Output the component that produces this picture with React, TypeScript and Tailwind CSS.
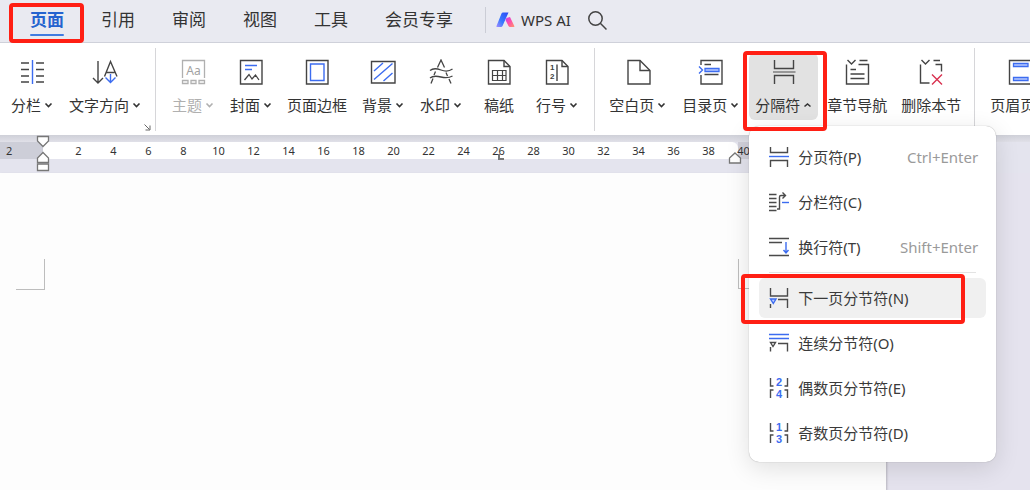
import { useState } from 'react';
import type { ReactNode } from 'react';

interface Tool {
  label: string;
  icon: ReactNode;
  dropdown?: boolean;
  disabled?: boolean;
}

interface MenuItem {
  label: string;
  shortcut?: string;
  icon: ReactNode;
}

const TABS = ['页面', '引用', '审阅', '视图', '工具', '会员专享'];

const RULER_MARKS = Array.from({ length: 20 }, (_, i) => (i + 1) * 2);

const BLUE = '#3c6cf0';

function ToolIcon({ children }: { children: ReactNode }) {
  return (
    <svg width="26" height="26" viewBox="0 0 26 26" fill="none" stroke="#444" strokeWidth="1.4" aria-hidden="true">
      {children}
    </svg>
  );
}

function SmallIcon({ children }: { children: ReactNode }) {
  return (
    <svg className="shrink-0 overflow-visible" width="20" height="20" viewBox="0 0 20 20" fill="none" stroke="#4a4a4a" strokeWidth="1.4" aria-hidden="true">
      {children}
    </svg>
  );
}

// Four page corners with a pair of page numbers between them
function PageNumbersIcon({ top, bottom }: { top: number; bottom: number }) {
  return (
    <SmallIcon>
      <path d="M1.5 0V8H4.5M18.5 0V8H15.5M1.5 20V12H4.5M18.5 20V12H15.5" />
      <g fill={BLUE} stroke="none" fontSize="11" fontWeight="700" fontFamily="Liberation Sans, sans-serif" textAnchor="middle">
        <text x="10" y="8">{top}</text>
        <text x="10" y="20">{bottom}</text>
      </g>
    </SmallIcon>
  );
}

const LAYOUT_TOOLS: Tool[] = [
  {
    label: '分栏',
    dropdown: true,
    icon: (
      <ToolIcon>
        <path d="M2 4H10M2 10.5H10M2 17H10M2 23H10M17 4H25M17 10.5H25M17 17H25M17 23H25" />
        <path d="M13.5 1V25" stroke={BLUE} />
      </ToolIcon>
    ),
  },
  {
    label: '文字方向',
    dropdown: true,
    icon: (
      <ToolIcon>
        <path d="M6 2V24M1 19L6 24L11 19" />
        <path d="M12.5 17.5L18.5 2.5L25 17.5M14.5 13.5H22.5" />
        <path d="M18.5 15V23.5M13.5 18.5L18.5 23.5L23.5 18.5" stroke={BLUE} />
      </ToolIcon>
    ),
  },
];

const PAGE_TOOLS: Tool[] = [
  {
    label: '主题',
    dropdown: true,
    disabled: true,
    icon: (
      <svg width="26" height="26" viewBox="0 0 26 26" fill="none" stroke="#b0b0b0" strokeWidth="1.3" aria-hidden="true">
        <path d="M2.5 19V1.5H24.5V19" />
        <path d="M2.5 21.5H8V24.5H2.5ZM11 21.5H16V24.5H11ZM19 21.5H24.5V24.5H19Z" />
        <text x="13.5" y="15.5" fontSize="12" fontFamily="Noto Sans, sans-serif" textAnchor="middle" fill="#a2a2a2" stroke="none">Aa</text>
      </svg>
    ),
  },
  {
    label: '封面',
    dropdown: true,
    icon: (
      <ToolIcon>
        <path d="M2.5 1.5H24V25H2.5Z" />
        <path d="M7 6.5H19M7 10.5H14" stroke={BLUE} />
        <path d="M6.5 21L11 15.5L14 20L17.5 16L21 21" strokeWidth="1.3" />
      </ToolIcon>
    ),
  },
  {
    label: '页面边框',
    icon: (
      <ToolIcon>
        <path d="M2.5 1.5H24V25H2.5Z" />
        <path d="M6.5 5H20V21.5H6.5Z" stroke={BLUE} />
      </ToolIcon>
    ),
  },
  {
    label: '背景',
    dropdown: true,
    icon: (
      <ToolIcon>
        <path d="M1.5 2.5H25V24H1.5Z" />
        <path d="M4 12L13 4M4 20.5L22.5 4.5M13.5 22L22.5 14" stroke={BLUE} />
      </ToolIcon>
    ),
  },
  {
    label: '水印',
    dropdown: true,
    icon: (
      <ToolIcon>
        <g strokeWidth="1.3">
          <path d="M9.5 8.5L13 1L16.5 8.5" />
          <path d="M2 11.5C5 9 9 9.5 13 11C17 12.5 21 12.5 24.5 10" />
          <path d="M2 19C5 16.5 9 17 13 18C17 19 21 19 24.5 17" />
          <path d="M7.5 12.5L6 16M5 19.5L3 24.5M18 13.5L19.5 17M21 20L23 24.5" />
        </g>
      </ToolIcon>
    ),
  },
  {
    label: '稿纸',
    icon: (
      <ToolIcon>
        <path d="M2.5 1.5H18L24 7.5V25H2.5Z" />
        <path d="M18 1.5V7.5H24" />
        <path d="M6.5 11.5H20V21.5H6.5ZM6.5 16.5H20M11.5 11.5V21.5M16.5 11.5V21.5" strokeWidth="1.2" />
      </ToolIcon>
    ),
  },
  {
    label: '行号',
    dropdown: true,
    icon: (
      <ToolIcon>
        <path d="M2.5 1.5H18L24 7.5V25H2.5Z" />
        <path d="M18 1.5V7.5H24M13 5.5V22" />
        <g fill="#3f3f3f" stroke="none" fontSize="8" fontWeight="700" fontFamily="Liberation Sans, sans-serif">
          <text x="6" y="11">1</text>
          <text x="6" y="20">2</text>
        </g>
      </ToolIcon>
    ),
  },
];

const INSERT_TOOLS: Tool[] = [
  {
    label: '空白页',
    dropdown: true,
    icon: (
      <ToolIcon>
        <path d="M3 1.5H15L25 11.5V25H3Z" />
        <path d="M15 1.5V11.5H25" />
      </ToolIcon>
    ),
  },
  {
    label: '目录页',
    dropdown: true,
    icon: (
      <ToolIcon>
        <path d="M3 6V1.5H24V25H3V16M6.5 5.5H13M6.5 15.5H20.5" />
        <path d="M7 9.5H21V12.5H7Z" stroke={BLUE} fill="#b9caff" strokeWidth="1.3" />
        <path d="M1 7.5L4.5 11L1 14.5" stroke={BLUE} />
      </ToolIcon>
    ),
  },
];

const BREAK_TOOL: Tool = {
  label: '分隔符',
  dropdown: true,
  icon: (
    <ToolIcon>
      <path d="M3.5 1V9.5H22.5V1M3.5 25V16.5H22.5V25" />
      <path d="M2 13H24.5" stroke="#777" />
    </ToolIcon>
  ),
};

const CHAPTER_TOOLS: Tool[] = [
  {
    label: '章节导航',
    icon: (
      <ToolIcon>
        <path d="M3.5 1L7.5 5L11.5 1M15.5 1.5H23.5M2.5 5.5V25H24.5V5.5H14.5" />
        <path d="M6.5 10.5H12M6.5 15H20.5M6.5 19.5H20.5" strokeWidth="1.3" />
      </ToolIcon>
    ),
  },
  {
    label: '删除本节',
    icon: (
      <ToolIcon>
        <path d="M3.5 1L7.5 5L11.5 1M15.5 1.5H22M17.5 5.5H23.5V12.5M2.5 5.5V24H11.5" />
        <path d="M14 15.5L24 25.5M24 15.5L14 25.5" stroke="#d9304f" />
      </ToolIcon>
    ),
  },
];

const HEADER_TOOL: Tool = {
  label: '页眉页脚',
  icon: (
    <ToolIcon>
      <path d="M2.5 1.5H25V25H2.5Z" />
      <path d="M6.5 4.5H21V7.5H6.5ZM6.5 18.5H21V21.5H6.5Z" stroke={BLUE} fill="#b9caff" strokeWidth="1.3" />
    </ToolIcon>
  ),
};

const BREAK_ITEMS: MenuItem[] = [
  {
    label: '分页符(P)',
    shortcut: 'Ctrl+Enter',
    icon: (
      <SmallIcon>
        <path d="M1.5 0V5.5H18.5V0M1.5 20V13.5H18.5V20" />
        <path d="M0 9.5H20" stroke={BLUE} />
      </SmallIcon>
    ),
  },
  {
    label: '分栏符(C)',
    icon: (
      <SmallIcon>
        <path d="M0 2.5H7.5M0 6.5H7.5M0 10.5H7.5M0 14.5H7.5M0 18.5H7.5" />
        <path d="M8 17H10.5V5Q10.5 3.5 12 3.5H16.5M13.5 0.5L16.5 3.5L13.5 6.5" />
        <path d="M13 10.5H20" stroke={BLUE} />
      </SmallIcon>
    ),
  },
  {
    label: '换行符(T)',
    shortcut: 'Shift+Enter',
    icon: (
      <SmallIcon>
        <path d="M0 1.5H20M0 5.5H13M0 18.5H20" />
        <path d="M17 5V16M14.5 13L17 16L19.5 13" stroke={BLUE} />
      </SmallIcon>
    ),
  },
];

const SECTION_ITEMS: MenuItem[] = [
  {
    label: '下一页分节符(N)',
    icon: (
      <SmallIcon>
        <path d="M1.5 0V8H18.5V0M9 11.5H18.5V20M1.5 16V20" />
        <path d="M1.5 11H7L4.3 15.5Z" stroke={BLUE} fill="#b9caff" />
      </SmallIcon>
    ),
  },
  {
    label: '连续分节符(O)',
    icon: (
      <SmallIcon>
        <path d="M0 1.5H20M0 5.5H20" stroke={BLUE} />
        <path d="M9 10.5H18.5V18.5M1.5 14V18.5M1.5 9.5H6.5L4 13.5Z" />
      </SmallIcon>
    ),
  },
  { label: '偶数页分节符(E)', icon: <PageNumbersIcon top={2} bottom={4} /> },
  { label: '奇数页分节符(D)', icon: <PageNumbersIcon top={1} bottom={3} /> },
];

function ToolButton({ tool, open, onClick }: { tool: Tool; open?: boolean; onClick?: () => void }) {
  return (
    <button
      type="button"
      disabled={tool.disabled}
      onClick={onClick}
      className={`flex h-[67px] min-w-[54px] shrink-0 flex-col items-center rounded-md pt-1.5 ${
        tool.dropdown ? 'px-1.5' : 'px-[5px]'
      } ${open ? 'bg-[#e2e2e2]' : ''} ${tool.disabled ? 'text-[#b0b0b0]' : 'text-[#333]'}`}
    >
      {tool.icon}
      <span className="mt-2 flex items-center gap-[3px] whitespace-nowrap text-[15px] leading-6">
        {tool.label}
        {tool.dropdown && (
          <svg width="9" height="6" viewBox="0 0 9 6" fill="none" stroke="currentColor" strokeWidth="1.6" aria-hidden="true">
            <path d={open ? 'M1.5 4.5L4.5 2L7.5 4.5' : 'M1.5 1.5L4.5 4.5L7.5 1.5'} />
          </svg>
        )}
      </span>
    </button>
  );
}

function Divider() {
  return <div className="-mt-[5px] h-[83px] w-px shrink-0 bg-[#d6d6d9]" />;
}

function Callout({ className }: { className: string }) {
  return <div className={`pointer-events-none absolute rounded-sm border-4 border-[#ff1f14] ${className}`} />;
}

function MenuRow({ item, active }: { item: MenuItem; active?: boolean }) {
  return (
    <button
      type="button"
      role="menuitem"
      className={`relative flex h-10 items-center rounded-md pl-2.5 pr-2 text-[15px] text-[#3a3a3a] ${active ? 'bg-[#f0f0f0]' : ''}`}
    >
      {item.icon}
      <span className="ml-[9px]">{item.label}</span>
      {item.shortcut && <span className="ml-auto text-[#9a9a9a]">{item.shortcut}</span>}
      {active && <Callout className="-left-[18px] -top-1 h-[50px] w-56" />}
    </button>
  );
}

function BreakMenu() {
  return (
    <div
      role="menu"
      className="absolute left-0 top-[73px] z-20 flex w-[247px] flex-col gap-[5px] rounded-[10px] bg-white px-2.5 pb-[9px] pt-[11px] shadow-[0_6px_24px_rgba(0,0,0,0.12),0_0_1px_rgba(0,0,0,0.4)]"
    >
      {BREAK_ITEMS.map((item) => (
        <MenuRow key={item.label} item={item} />
      ))}
      <div className="mx-2.5 h-px bg-[#e3e3e3]" />
      {SECTION_ITEMS.map((item, i) => (
        <MenuRow key={item.label} item={item} active={i === 0} />
      ))}
    </div>
  );
}

function TabBar() {
  const [active, setActive] = useState(TABS[0]);

  return (
    <nav className="flex h-[43px] shrink-0 items-center border-b border-[#cfd1da] bg-[#e9eaf1] pb-0.5 pl-[30px] text-[#333]">
      <div className="flex gap-[37px]">
        {TABS.map((tab) => (
          <button
            key={tab}
            type="button"
            onClick={() => setActive(tab)}
            className={`relative whitespace-nowrap text-[17px] leading-6 ${active === tab ? 'font-bold text-[#2563cf]' : ''}`}
          >
            {tab}
            {active === tab && <span className="absolute inset-x-0 -bottom-1 h-0.5 rounded-full bg-[#3f7be0]" />}
            {tab === '页面' && <Callout className="-left-[21px] -top-[5px] h-10 w-[75px]" />}
          </button>
        ))}
      </div>
      <div className="ml-8 h-[26px] w-px bg-[#cbcdd6]" />
      <button type="button" className="ml-2.5 flex items-center gap-1.5 whitespace-nowrap text-[15px]">
        <svg width="19" height="16" viewBox="0 0 19 16" aria-hidden="true">
          <defs>
            <linearGradient id="ai-left" x1="1" y1="0" x2="0" y2="1">
              <stop offset="0" stopColor="#2a48f5" />
              <stop offset="0.6" stopColor="#3a7bff" />
              <stop offset="1" stopColor="#a48bff" />
            </linearGradient>
            <linearGradient id="ai-right" x1="0" y1="0" x2="1" y2="1">
              <stop offset="0" stopColor="#c23cf5" />
              <stop offset="0.5" stopColor="#ff4fa8" />
              <stop offset="1" stopColor="#ff9a6a" />
            </linearGradient>
          </defs>
          <path d="M5.5 1.5Q6 0.5 7 0.5H12.5L6.5 14Q6 15 5 15H1Q0 15 0.5 14Z" fill="url(#ai-left)" />
          <path d="M10.5 6L14 5L18.3 14Q18.8 15 17.8 15H14Q13 15 12.5 14L9.5 8Z" fill="url(#ai-right)" />
        </svg>
        WPS AI
      </button>
      <button type="button" aria-label="搜索" className="ml-4">
        <svg width="21" height="21" viewBox="0 0 21 21" fill="none" stroke="#444" strokeWidth="1.5" aria-hidden="true">
          <circle cx="8.5" cy="8.5" r="6.7" />
          <path d="M13.3 13.3L19.5 19.5" />
        </svg>
      </button>
    </nav>
  );
}

function Ribbon() {
  const [menuOpen, setMenuOpen] = useState(true);

  return (
    <div className="relative z-10 flex h-[92px] shrink-0 gap-1 bg-white pl-[5px] pt-2.5">
      <div className="relative flex gap-1 pr-1">
        {LAYOUT_TOOLS.map((tool) => (
          <ToolButton key={tool.label} tool={tool} />
        ))}
        <svg className="absolute bottom-1 right-0" width="7" height="7" viewBox="0 0 7 7" fill="none" stroke="#666" aria-hidden="true">
          <path d="M0.5 0.5L5.5 5.5M6 1.5V6H1.5" />
        </svg>
      </div>
      <Divider />
      <div className="mx-1.5 flex gap-1">
        {PAGE_TOOLS.map((tool) => (
          <ToolButton key={tool.label} tool={tool} />
        ))}
      </div>
      <Divider />
      <div className="mx-1 flex gap-1">
        {INSERT_TOOLS.map((tool) => (
          <ToolButton key={tool.label} tool={tool} />
        ))}
        <div className="relative z-20">
          <ToolButton tool={BREAK_TOOL} open={menuOpen} onClick={() => setMenuOpen(!menuOpen)} />
          {menuOpen && <BreakMenu />}
          <Callout className="-left-1.5 -top-0.5 z-30 h-20 w-[84px]" />
        </div>
        {CHAPTER_TOOLS.map((tool) => (
          <ToolButton key={tool.label} tool={tool} />
        ))}
      </div>
      <Divider />
      <div className="ml-1.5">
        <ToolButton tool={HEADER_TOOL} />
      </div>
    </div>
  );
}

function Ruler() {
  return (
    <div className="h-[38px] shrink-0 bg-[#e4e4ee]">
      <div className="h-[7px] bg-linear-to-b from-[#cfd0d8] to-[#e0e0e8]" />
      <div className="flex h-[17px] text-[11px] leading-[17px] text-[#333]">
        <div className="w-[43px] shrink-0 bg-[#cdced8] pl-1.5">2</div>
        <div className="relative z-[1] flex w-[695px] shrink-0 rounded-r-md bg-white pl-[18px]">
          {RULER_MARKS.map((mark) => (
            <span key={mark} className="w-[35px] shrink-0 text-center">{mark}</span>
          ))}
          <svg className="absolute -left-[7px] -top-[7px]" width="14" height="38" viewBox="0 0 14 38" fill="#fff" stroke="#777" strokeWidth="1.3" aria-hidden="true">
            <path d="M1.5 1.5H12.5V6L7 11.5L1.5 6Z" />
            <path d="M7 17.5L12.5 23V27.5H1.5V23Z" />
            <path d="M1.5 29H12.5V35.5H1.5Z" />
          </svg>
          <svg className="absolute left-[455px] top-3" width="7" height="7" viewBox="0 0 7 7" fill="none" stroke="#777" strokeWidth="2" aria-hidden="true">
            <path d="M1 0V5H6" />
          </svg>
          <svg className="absolute -right-1 top-2.5" width="14" height="12" viewBox="0 0 14 12" fill="#fff" stroke="#777" strokeWidth="1.3" aria-hidden="true">
            <path d="M7 1L12.5 6V11H1.5V6Z" />
          </svg>
        </div>
        <div className="w-[148px] shrink-0 bg-[#d0cfd9]" />
      </div>
    </div>
  );
}

export default function App() {
  return (
    <div className="flex min-h-screen flex-col overflow-hidden bg-[#e5e3ee] font-['Noto_Sans','Noto_Sans_CJK_SC',sans-serif]">
      <TabBar />
      <Ribbon />
      <Ruler />
      <main className="flex w-[886px] flex-1 justify-between bg-[#fdfdfd] pl-4 pr-[119px] pt-[86px] shadow-[1px_1px_2px_rgba(0,0,0,0.2)]">
        <div className="h-[31px] w-[29px] border-b border-r border-[#bdbdbd]" />
        <div className="h-[30px] w-[29px] border-b border-l border-[#bdbdbd]" />
      </main>
    </div>
  );
}
